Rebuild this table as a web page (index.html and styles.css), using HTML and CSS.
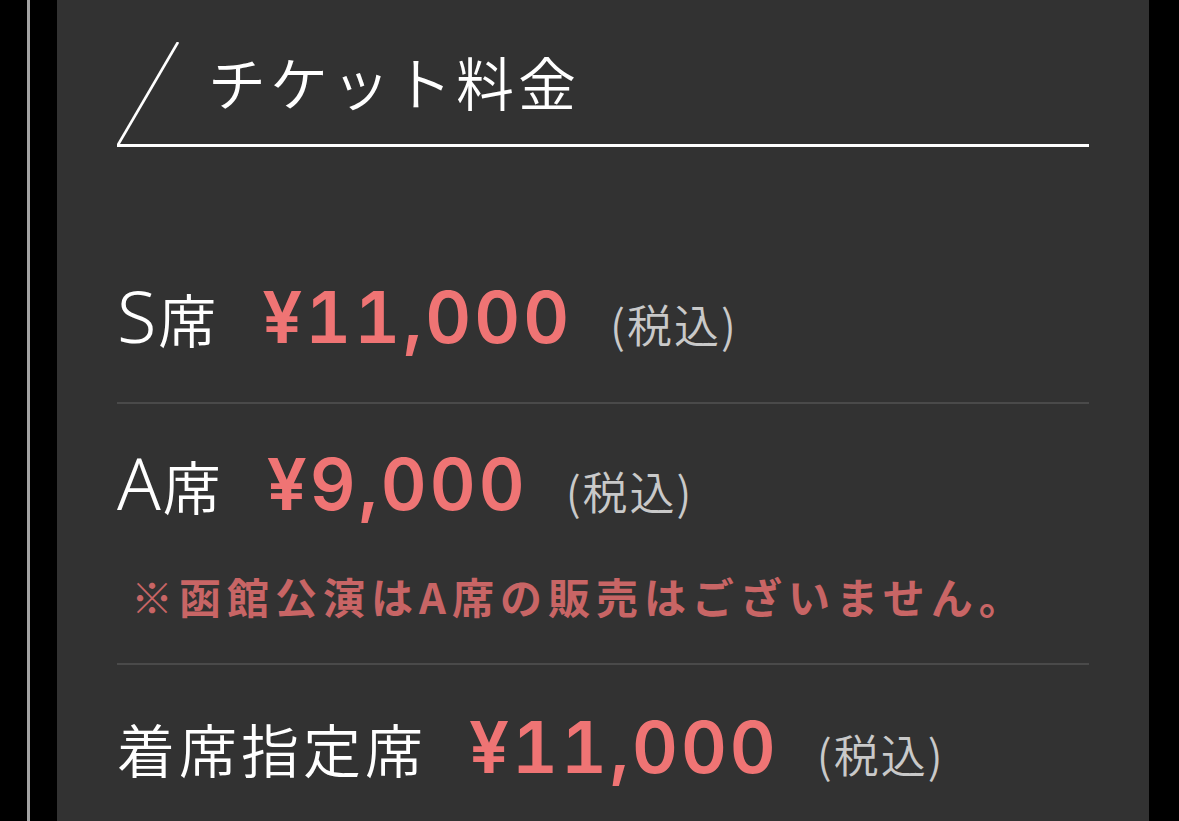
FILE: index.html
```html
<!DOCTYPE html>
<html lang="ja">
<head>
<meta charset="utf-8">
<title>チケット料金</title>
<link rel="stylesheet" href="styles.css">
</head>
<body>
<div class="page">
  <div class="rail"></div>
  <main class="panel">
    <header class="heading">
      <svg class="slash" width="62" height="102" viewBox="0 0 62 102" aria-hidden="true">
        <line x1="60.5" y1="1" x2="1.5" y2="102" stroke="#ffffff" stroke-width="2.6" stroke-linecap="round"/>
      </svg>
      <h2 class="title">チケット料金</h2>
    </header>

    <section class="row row-first">
      <div class="line">
        <span class="label"><span class="lat">S</span>席</span>
        <span class="price">¥11,000</span>
        <span class="tax">(税込)</span>
      </div>
    </section>

    <section class="row row-second">
      <div class="line">
        <span class="label"><span class="lat">A</span>席</span>
        <span class="price">¥9,000</span>
        <span class="tax">(税込)</span>
      </div>
      <p class="note">※函館公演はA席の販売はございません。</p>
    </section>

    <section class="row row-last">
      <div class="line">
        <span class="label">着席指定席</span>
        <span class="price">¥11,000</span>
        <span class="tax">(税込)</span>
      </div>
    </section>
  </main>
</div>
</body>
</html>
```

FILE: styles.css
```css
html, body {
  margin: 0;
  padding: 0;
  background: #000;
}

body {
  font-family: "Noto Sans CJK JP", "Noto Sans", sans-serif;
  color: #fff;
}

.page {
  display: flex;
  height: 821px;
  overflow: hidden;
}

.rail {
  width: 3px;
  margin-left: 27px;
  background: #a3a3a3;
  flex: none;
}

.panel {
  flex: none;
  width: 972px;
  margin-left: 27px;
  padding: 0 60px;
  background: #323232;
}

.heading {
  display: flex;
  align-items: flex-end;
  padding-top: 42px;
  border-bottom: 3px solid #ffffff;
}

.slash {
  display: block;
  flex: none;
}

.title {
  margin: 0 0 34px 29px;
  font-size: 58px;
  line-height: 1;
  font-weight: 350;
  letter-spacing: 4px;
}

.row {
  border-bottom: 2px solid #4a4a4a;
}

.row-first {
  padding: 132px 0 49px;
}

.row-second {
  padding: 42px 0 46px;
}

.row-last {
  padding: 47px 0 0;
  border-bottom: none;
}

.line {
  display: flex;
  align-items: baseline;
  line-height: 1;
}

.label {
  font-size: 58px;
  font-weight: 350;
  letter-spacing: 4px;
}

.lat {
  font-family: "Noto Sans", sans-serif;
  font-size: 72px;
  font-weight: 300;
  letter-spacing: 2px;
}

.price {
  margin-left: 42px;
  font-family: Inter, "Noto Sans", sans-serif;
  font-size: 71px;
  font-weight: 600;
  font-variant-numeric: tabular-nums;
  letter-spacing: 3px;
  color: #ef7474;
}

.tax {
  margin-left: 38px;
  font-size: 45px;
  font-weight: 350;
  letter-spacing: 2px;
  color: #c9c9c9;
}

.note {
  margin: 55px 0 0 14px;
  font-size: 42px;
  line-height: 1;
  font-weight: 700;
  letter-spacing: 6px;
  color: #c86565;
}
```
